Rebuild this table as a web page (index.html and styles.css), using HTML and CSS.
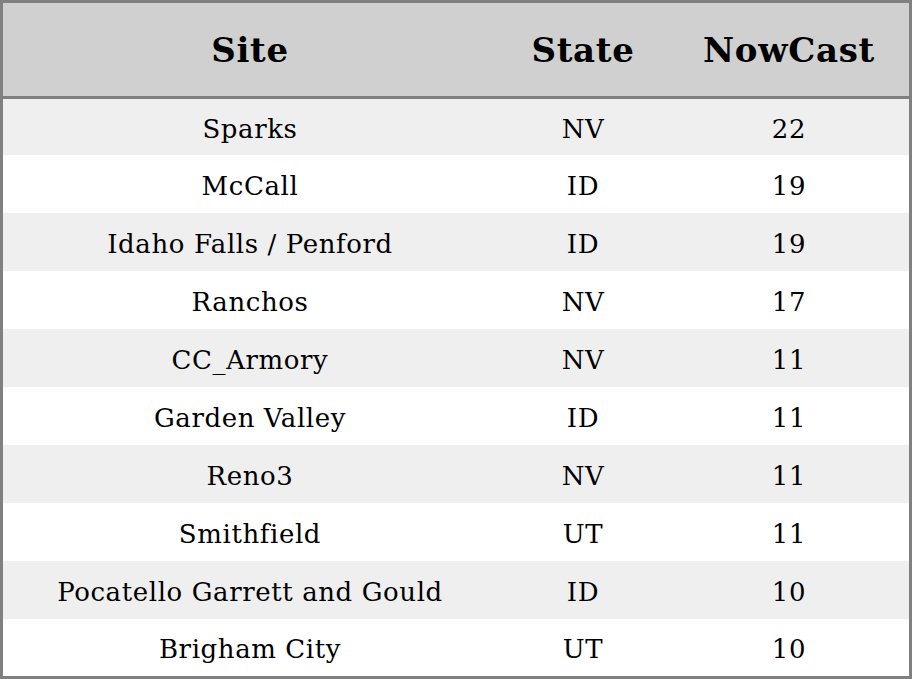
FILE: index.html
```html
<!DOCTYPE html>
<html>
<head>
<meta charset="utf-8">
<link rel="stylesheet" href="styles.css">
</head>
<body>
<div class="table">
  <div class="row head"><div class="c site">Site</div><div class="c">State</div><div class="c">NowCast</div></div>
  <div class="row odd"><div class="c site">Sparks</div><div class="c">NV</div><div class="c">22</div></div>
  <div class="row"><div class="c site">McCall</div><div class="c">ID</div><div class="c">19</div></div>
  <div class="row odd"><div class="c site">Idaho Falls / Penford</div><div class="c">ID</div><div class="c">19</div></div>
  <div class="row"><div class="c site">Ranchos</div><div class="c">NV</div><div class="c">17</div></div>
  <div class="row odd"><div class="c site">CC_Armory</div><div class="c">NV</div><div class="c">11</div></div>
  <div class="row"><div class="c site">Garden Valley</div><div class="c">ID</div><div class="c">11</div></div>
  <div class="row odd"><div class="c site">Reno3</div><div class="c">NV</div><div class="c">11</div></div>
  <div class="row"><div class="c site">Smithfield</div><div class="c">UT</div><div class="c">11</div></div>
  <div class="row odd"><div class="c site">Pocatello Garrett and Gould</div><div class="c">ID</div><div class="c">10</div></div>
  <div class="row last"><div class="c site">Brigham City</div><div class="c">UT</div><div class="c">10</div></div>
</div>
</body>
</html>
```
FILE: styles.css
```css
html, body { margin: 0; padding: 0; background: #fff; }
.table {
  width: 912px;
  height: 679px;
  box-sizing: border-box;
  border: 3px solid #808080;
  font-family: "DejaVu Serif", serif;
  font-size: 26px;
  letter-spacing: 0.6px;
  font-variant-ligatures: none;
  color: #000;
  display: flex;
  flex-direction: column;
}
.row {
  display: grid;
  grid-template-columns: 494px 172px 1fr;
  height: 58px;
  align-items: center;
  background: #fff;
}
.row.odd { background: #efefef; }
.row .c { padding-top: 3px; }
.row.head {
  height: 93px;
  background: #d0d0d0;
  border-bottom: 3px solid #808080;
  font-weight: bold;
  font-size: 34px;
  letter-spacing: 0.7px;
}
.row.head .c { padding-top: 0; }
.row.head + .row { height: 56px; }
.row.last { height: 57px; }
.c { text-align: center; white-space: nowrap; }
```
